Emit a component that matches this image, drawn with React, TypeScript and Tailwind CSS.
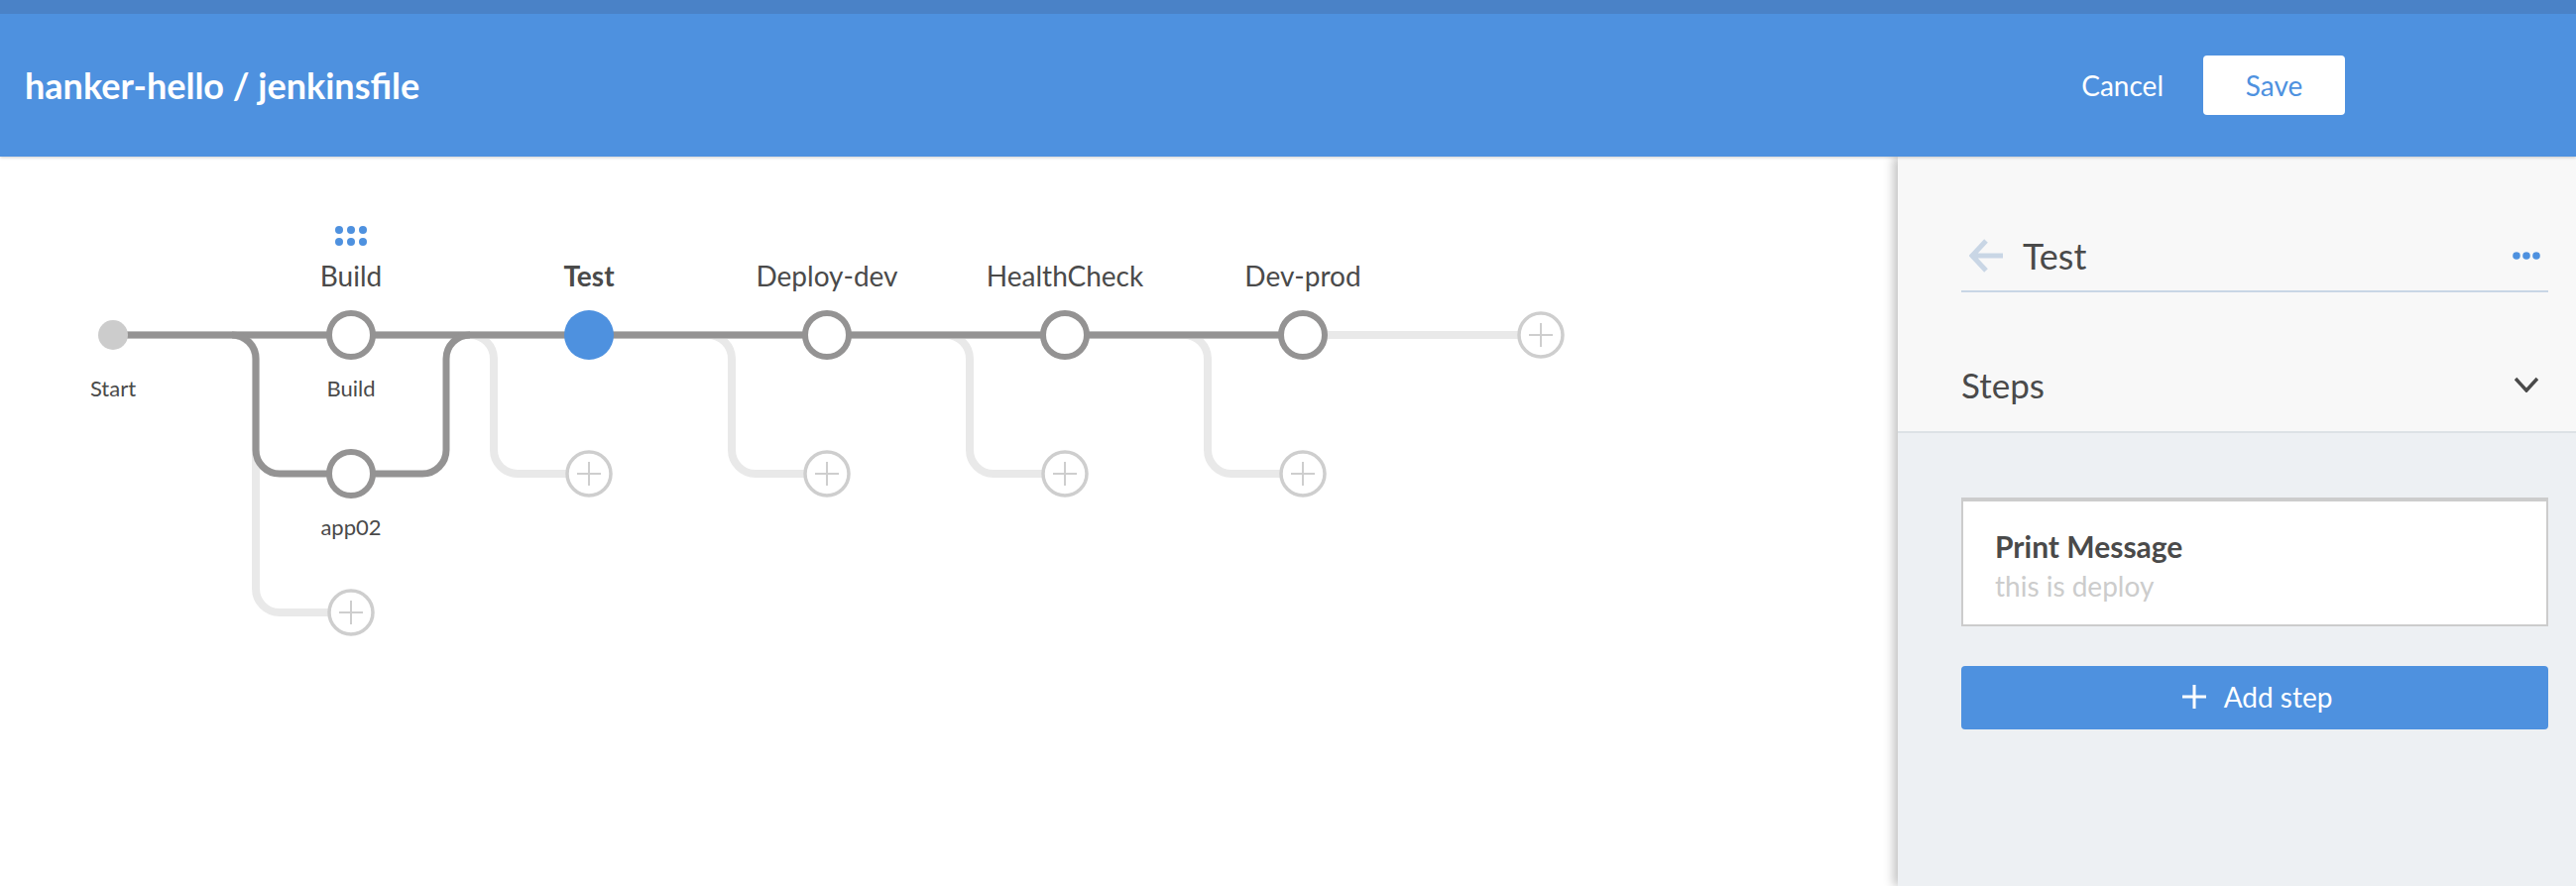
function AddNode({ x, y }: { x: number; y: number }) {
  return (
    <g>
      <circle cx={x} cy={y} r="22" fill="#ffffff" stroke="#cecece" strokeWidth="3.5" />
      <path d={`M${x - 12} ${y}H${x + 12}M${x} ${y - 12}V${y + 12}`} stroke="#cecece" strokeWidth="2" />
    </g>
  )
}

function StageNode({ x, y }: { x: number; y: number }) {
  return <circle cx={x} cy={y} r="22" fill="#ffffff" stroke="#949393" strokeWidth="6" />
}

function Pipeline() {
  return (
    <svg className="absolute inset-0 h-full w-full" viewBox="0 158 1914 736" fill="none">
      {/* unused branch slots */}
      <g stroke="#e9e9e9" strokeWidth="8">
        <path d="M114 338H1554" />
        <path d="M234 338a24 24 0 0 1 24 24V594a24 24 0 0 0 24 24H354" />
        {[474, 714, 954, 1194].map((x) => (
          <path key={x} d={`M${x} 338a24 24 0 0 1 24 24V454a24 24 0 0 0 24 24H${x + 120}`} />
        ))}
      </g>
      {/* active path */}
      <g stroke="#949393" strokeWidth="7">
        <path d="M114 338H1314" />
        <path d="M234 338a24 24 0 0 1 24 24V454a24 24 0 0 0 24 24H426a24 24 0 0 0 24-24V362a24 24 0 0 1 24-24" />
      </g>
      <circle cx="114" cy="338" r="15" fill="#cccccc" />
      <StageNode x={354} y={338} />
      <StageNode x={354} y={478} />
      <circle cx="594" cy="338" r="25" fill="#4e91df" />
      <StageNode x={834} y={338} />
      <StageNode x={1074} y={338} />
      <StageNode x={1314} y={338} />
      <AddNode x={1554} y={338} />
      <AddNode x={354} y={618} />
      <AddNode x={594} y={478} />
      <AddNode x={834} y={478} />
      <AddNode x={1074} y={478} />
      <AddNode x={1314} y={478} />
      <g fill="#4e91df">
        <circle cx="342" cy="232" r="4" />
        <circle cx="354" cy="232" r="4" />
        <circle cx="366" cy="232" r="4" />
        <circle cx="342" cy="244" r="4" />
        <circle cx="354" cy="244" r="4" />
        <circle cx="366" cy="244" r="4" />
      </g>
    </svg>
  )
}

export default function App() {
  return (
    <div className="flex h-[894px] w-[2598px] flex-col overflow-hidden bg-white font-['Lato','Open_Sans',sans-serif] text-[#4a4a4a]">
      <div className="relative z-20 shadow-[0_1px_3px_rgba(0,0,0,0.2)]">
        <div className="h-[14px] bg-[#4a82c7]" />
        <header className="flex h-[144px] items-center justify-between bg-[#4e91df] pl-[25px] pr-[233px] text-white">
          <h1 className="text-[36px] font-bold leading-none">hanker-hello / jenkinsfile</h1>
          <div className="flex items-center gap-10">
            <span className="text-[28px]">Cancel</span>
            <button className="h-[60px] w-[143px] rounded-[4px] bg-white text-[28px] text-[#4e91df]">Save</button>
          </div>
        </header>
      </div>

      <div className="flex min-h-0 flex-1">
        <main className="relative flex-1">
          <Pipeline />
          <span className="absolute left-[354px] top-[102px] -translate-x-1/2 text-[28px] leading-[36px]">Build</span>
          <span className="absolute left-[594px] top-[102px] -translate-x-1/2 text-[28px] font-bold leading-[36px]">Test</span>
          <span className="absolute left-[834px] top-[102px] -translate-x-1/2 text-[28px] leading-[36px]">Deploy-dev</span>
          <span className="absolute left-[1074px] top-[102px] -translate-x-1/2 text-[28px] leading-[36px]">HealthCheck</span>
          <span className="absolute left-[1314px] top-[102px] -translate-x-1/2 text-[28px] leading-[36px]">Dev-prod</span>
          <span className="absolute left-[114px] top-[219px] -translate-x-1/2 text-[22px] leading-[30px]">Start</span>
          <span className="absolute left-[354px] top-[219px] -translate-x-1/2 text-[22px] leading-[30px]">Build</span>
          <span className="absolute left-[354px] top-[359px] -translate-x-1/2 text-[22px] leading-[30px]">app02</span>
        </main>

        <aside className="z-10 flex w-[684px] flex-col bg-[#f8f8f8] shadow-[-4px_0_10px_rgba(0,0,0,0.25)]">
          <div className="pl-[64px] pr-[28px]">
            <div className="mt-[67px] flex h-[70px] items-center border-b-2 border-[#c9d6e5] pb-[3px]">
              <svg className="ml-2 h-[34px] w-[34px] shrink-0" viewBox="0 0 34 34" fill="none" stroke="#c9d6e5" strokeWidth="5">
                <path d="M34 17H3M17 2L3 17L17 32" />
              </svg>
              <span className="ml-[20px] text-[36px] leading-none">Test</span>
              <svg className="ml-auto mr-[8px] h-2 w-[28px]" viewBox="0 0 28 8" fill="#4e91df">
                <circle cx="4" cy="4" r="3.8" />
                <circle cx="14" cy="4" r="3.8" />
                <circle cx="24" cy="4" r="3.8" />
              </svg>
            </div>
            <div className="mb-[17px] mt-[63px] flex h-[60px] items-center justify-between">
              <span className="text-[35px] leading-none">Steps</span>
              <svg className="mr-[10px] h-4 w-6" viewBox="0 0 24 16" fill="none" stroke="#4a4a4a" strokeWidth="3.5">
                <path d="M1 2L12 14L23 2" />
              </svg>
            </div>
          </div>
          <div className="flex-1 border-t-2 border-[#dde2e6] bg-[#edf0f3] pl-[64px] pr-[28px] pt-[65px]">
            <div className="flex h-[130px] flex-col border-2 border-t-4 border-[#cccccc] bg-white pl-[32px]">
              <div className="mt-[25px] text-[30px] font-bold leading-[40px]">Print Message</div>
              <div className="mt-[1px] text-[28px] leading-[38px] text-[#cccccc]">this is deploy</div>
            </div>
            <button className="mt-10 flex h-16 w-full items-center justify-center gap-[18px] rounded-[4px] bg-[#4e91df] pb-[2px] pl-[5px] text-[28px] text-white">
              <svg className="h-6 w-6" viewBox="0 0 24 24" fill="none" stroke="#ffffff" strokeWidth="3">
                <path d="M0 12H24M12 0V24" />
              </svg>
              Add step
            </button>
          </div>
        </aside>
      </div>
    </div>
  )
}
